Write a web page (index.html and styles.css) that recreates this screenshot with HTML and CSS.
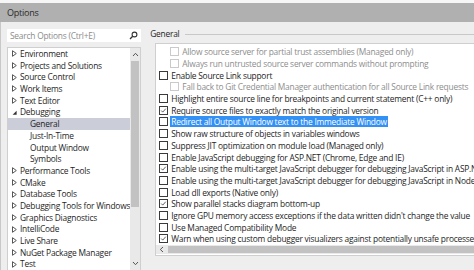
FILE: index.html
```html
<!DOCTYPE html>
<html>
<head>
<meta charset="utf-8">
<link rel="stylesheet" href="styles.css">
</head>
<body>
<div class="topstrip"></div>
<div class="titlebar">Options</div>
<div class="main">
  <div class="left">
    <div class="search">
      <span class="ph">Search Options (Ctrl+E)</span>
      <svg class="mag" width="9" height="9" viewBox="0 0 9 9"><circle cx="5.5" cy="3.5" r="2.4" fill="none" stroke="#333" stroke-width="1.1"/><line x1="3.7" y1="5.3" x2="1" y2="8" stroke="#333" stroke-width="1.3"/></svg>
    </div>
    <div class="tree">
      <div class="list">
        <div class="item"><svg class="arr" viewBox="0 0 5 7"><path d="M0.5 0.7 L4.3 3.5 L0.5 6.3 Z" fill="none" stroke="#444" stroke-width="0.9"/></svg>Environment</div>
        <div class="item"><svg class="arr" viewBox="0 0 5 7"><path d="M0.5 0.7 L4.3 3.5 L0.5 6.3 Z" fill="none" stroke="#444" stroke-width="0.9"/></svg>Projects and Solutions</div>
        <div class="item"><svg class="arr" viewBox="0 0 5 7"><path d="M0.5 0.7 L4.3 3.5 L0.5 6.3 Z" fill="none" stroke="#444" stroke-width="0.9"/></svg>Source Control</div>
        <div class="item"><svg class="arr" viewBox="0 0 5 7"><path d="M0.5 0.7 L4.3 3.5 L0.5 6.3 Z" fill="none" stroke="#444" stroke-width="0.9"/></svg>Work Items</div>
        <div class="item"><svg class="arr" viewBox="0 0 5 7"><path d="M0.5 0.7 L4.3 3.5 L0.5 6.3 Z" fill="none" stroke="#444" stroke-width="0.9"/></svg>Text Editor</div>
        <div class="item"><svg class="arr" viewBox="0 0 5 7"><path d="M4.6 1.8 L4.6 5.8 L0.6 5.8 Z" fill="#333"/></svg>Debugging</div>
        <div class="item child sel">General</div>
        <div class="item child">Just-In-Time</div>
        <div class="item child">Output Window</div>
        <div class="item child">Symbols</div>
        <div class="item"><svg class="arr" viewBox="0 0 5 7"><path d="M0.5 0.7 L4.3 3.5 L0.5 6.3 Z" fill="none" stroke="#444" stroke-width="0.9"/></svg>Performance Tools</div>
        <div class="item"><svg class="arr" viewBox="0 0 5 7"><path d="M0.5 0.7 L4.3 3.5 L0.5 6.3 Z" fill="none" stroke="#444" stroke-width="0.9"/></svg>CMake</div>
        <div class="item"><svg class="arr" viewBox="0 0 5 7"><path d="M0.5 0.7 L4.3 3.5 L0.5 6.3 Z" fill="none" stroke="#444" stroke-width="0.9"/></svg>Database Tools</div>
        <div class="item"><svg class="arr" viewBox="0 0 5 7"><path d="M0.5 0.7 L4.3 3.5 L0.5 6.3 Z" fill="none" stroke="#444" stroke-width="0.9"/></svg>Debugging Tools for Windows</div>
        <div class="item"><svg class="arr" viewBox="0 0 5 7"><path d="M0.5 0.7 L4.3 3.5 L0.5 6.3 Z" fill="none" stroke="#444" stroke-width="0.9"/></svg>Graphics Diagnostics</div>
        <div class="item"><svg class="arr" viewBox="0 0 5 7"><path d="M0.5 0.7 L4.3 3.5 L0.5 6.3 Z" fill="none" stroke="#444" stroke-width="0.9"/></svg>IntelliCode</div>
        <div class="item"><svg class="arr" viewBox="0 0 5 7"><path d="M0.5 0.7 L4.3 3.5 L0.5 6.3 Z" fill="none" stroke="#444" stroke-width="0.9"/></svg>Live Share</div>
        <div class="item"><svg class="arr" viewBox="0 0 5 7"><path d="M0.5 0.7 L4.3 3.5 L0.5 6.3 Z" fill="none" stroke="#444" stroke-width="0.9"/></svg>NuGet Package Manager</div>
        <div class="item"><svg class="arr" viewBox="0 0 5 7"><path d="M0.5 0.7 L4.3 3.5 L0.5 6.3 Z" fill="none" stroke="#444" stroke-width="0.9"/></svg>Test</div>
      </div>
      <div class="vscroll">
        <svg class="sarrow" width="7" height="5" viewBox="0 0 7 5"><path d="M1 4 L3.5 1.3 L6 4" fill="none" stroke="#555" stroke-width="1"/></svg>
        <div class="vtrack"><div class="vthumb"></div></div>
        <svg class="sarrow" width="7" height="5" viewBox="0 0 7 5"><path d="M1 1 L3.5 3.7 L6 1" fill="none" stroke="#555" stroke-width="1"/></svg>
      </div>
    </div>
  </div>
  <div class="right">
    <div class="ghead"><span class="gtitle">General</span><span class="gline"></span></div>
    <div class="box">
      <div class="rows">
        <div class="row sub dis"><span class="cb"></span><span class="lbl">Allow source server for partial trust assemblies (Managed only)</span></div>
        <div class="row sub dis"><span class="cb"></span><span class="lbl">Always run untrusted source server commands without prompting</span></div>
        <div class="row"><span class="cb"></span><span class="lbl">Enable Source Link support</span></div>
        <div class="row sub dis"><span class="cb"></span><span class="lbl">Fall back to Git Credential Manager authentication for all Source Link requests</span></div>
        <div class="row"><span class="cb"></span><span class="lbl">Highlight entire source line for breakpoints and current statement (C++ only)</span></div>
        <div class="row"><span class="cb"><svg viewBox="0 0 9 9"><path d="M1.6 4.6 L3.5 6.6 L7.4 2.2" fill="none" stroke="#333" stroke-width="1"/></svg></span><span class="lbl">Require source files to exactly match the original version</span></div>
        <div class="row"><span class="cb"></span><span class="lbl hl">Redirect all Output Window text to the Immediate Window</span></div>
        <div class="row"><span class="cb"></span><span class="lbl">Show raw structure of objects in variables windows</span></div>
        <div class="row"><span class="cb"></span><span class="lbl">Suppress JIT optimization on module load (Managed only)</span></div>
        <div class="row"><span class="cb"></span><span class="lbl">Enable JavaScript debugging for ASP.NET (Chrome, Edge and IE)</span></div>
        <div class="row"><span class="cb"><svg viewBox="0 0 9 9"><path d="M1.6 4.6 L3.5 6.6 L7.4 2.2" fill="none" stroke="#333" stroke-width="1"/></svg></span><span class="lbl">Enable using the multi-target JavaScript debugger for debugging JavaScript in ASP.NET</span></div>
        <div class="row"><span class="cb"></span><span class="lbl">Enable using the multi-target JavaScript debugger for debugging JavaScript in Node.js</span></div>
        <div class="row"><span class="cb"></span><span class="lbl">Load dll exports (Native only)</span></div>
        <div class="row"><span class="cb"><svg viewBox="0 0 9 9"><path d="M1.6 4.6 L3.5 6.6 L7.4 2.2" fill="none" stroke="#333" stroke-width="1"/></svg></span><span class="lbl">Show parallel stacks diagram bottom-up</span></div>
        <div class="row"><span class="cb"></span><span class="lbl">Ignore GPU memory access exceptions if the data written didn't change the value</span></div>
        <div class="row"><span class="cb"></span><span class="lbl">Use Managed Compatibility Mode</span></div>
        <div class="row"><span class="cb"><svg viewBox="0 0 9 9"><path d="M1.6 4.6 L3.5 6.6 L7.4 2.2" fill="none" stroke="#333" stroke-width="1"/></svg></span><span class="lbl">Warn when using custom debugger visualizers against potentially unsafe processes (Managed only)</span></div>
      </div>
      <div class="hscroll">
        <svg class="harrow" width="5" height="7" viewBox="0 0 5 7"><path d="M4 1 L1.3 3.5 L4 6" fill="none" stroke="#555" stroke-width="1"/></svg>
        <div class="hthumb"></div>
      </div>
    </div>
  </div>
</div>
</body>
</html>
```
FILE: styles.css
```css
* { box-sizing: border-box; }
html, body { margin: 0; padding: 0; }
body {
  width: 474px;
  height: 270px;
  overflow: hidden;
  background: #eeeeee;
  font-family: "Open Sans", "Noto Sans", sans-serif;
  font-size: 8.4px;
  letter-spacing: -0.22px;
  color: #1e1e1e;
}
.topstrip { height: 3px; background: #f6f6f6; }
.titlebar {
  height: 19px;
  background: #b0b0b0;
  padding-left: 7px;
  line-height: 19px;
  font-size: 9px;
  color: #2a2a2a;
}
.main { display: flex; height: 248px; border-left: 1px solid #c8c8c8; }
.left {
  width: 146px;
  margin-left: 6px;
  padding-top: 7px;
  display: flex;
  flex-direction: column;
}
.search {
  height: 13px;
  background: #fff;
  display: flex;
  align-items: center;
  padding-left: 3px;
  padding-right: 3px;
}
.ph { flex: 1; color: #8c8c8c; white-space: nowrap; }
.mag { display: block; }
.tree {
  margin-top: 5px;
  flex: 1;
  border: 1px solid #cfcfcf;
  border-bottom: none;
  background: #fff;
  display: flex;
  overflow: hidden;
}
.list { flex: 1; }
.item {
  height: 11.7px;
  line-height: 11.7px;
  padding-left: 4px;
  white-space: nowrap;
  display: flex;
  align-items: center;
}
.arr { width: 5px; height: 7px; margin-right: 3px; flex: none; }
.child { padding-left: 22px; }
.sel { background: #cbcdd9; }
.vscroll {
  width: 10px;
  background: #e9e9e9;
  display: flex;
  flex-direction: column;
  align-items: center;
}
.sarrow { margin: 4px 0; flex: none; }
.vtrack { flex: 1; width: 100%; padding: 0 1px; }
.vthumb { height: 146px; background: #c2c2c2; width: 100%; }
.right { flex: 1; margin-left: 7px; padding-top: 6px; display: flex; flex-direction: column; }
.ghead { height: 12px; display: flex; align-items: center; padding-left: 2px; }
.gtitle { line-height: 12px; color: #1e1e1e; }
.gline { flex: 1; height: 1px; background: #c8c8c8; margin-left: 5px; }
.box {
  margin-top: 3px;
  margin-left: 7px;
  height: 213px;
  border: 1px solid #cfcfcf;
  border-right: none;
  background: #fff;
  display: flex;
  flex-direction: column;
  overflow: hidden;
}
.rows { padding-top: 2px; padding-left: 3px; }
.row {
  height: 11.7px;
  display: flex;
  align-items: center;
  white-space: nowrap;
}
.cb {
  width: 9px;
  height: 9px;
  border: 1px solid #3a3a3a;
  background: #fff;
  flex: none;
  margin-right: 2px;
  display: flex;
}
.cb svg { width: 7px; height: 7px; }
.sub { padding-left: 11px; }
.dis .cb { border-color: #cacaca; }
.dis .lbl { color: #8d8d8d; }
.lbl { line-height: 11px; padding-left: 1px; padding-right: 1px; }
.hl { background: #3390f4; color: #fff; }
.hscroll {
  margin-top: auto;
  height: 9px;
  margin-bottom: 1px;
  background: #e9e9e9;
  display: flex;
  align-items: center;
}
.harrow { margin-left: 3px; margin-right: 4px; flex: none; }
.hthumb { flex: 1; height: 7px; background: #c2c2c2; }
```
